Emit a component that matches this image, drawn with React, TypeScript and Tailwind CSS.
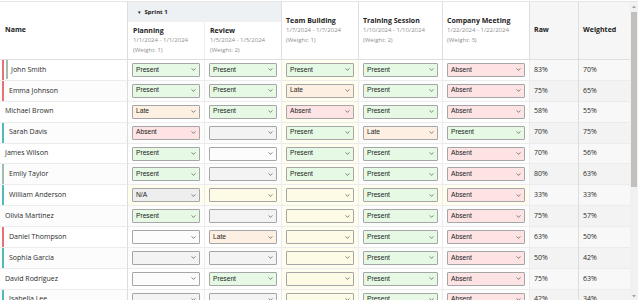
import React from 'react';

type Mark = '' | 'Present' | 'Late' | 'Absent' | 'N/A';
type Bar = 'red' | 'teal' | 'sage';

interface Student {
  name: string;
  bars: Bar[];
  marks: Mark[];
  raw: string;
  weighted: string;
}

const EVENTS = [
  { title: 'Planning', dates: '1/1/2024 - 1/1/2024', weight: 1 },
  { title: 'Review', dates: '1/5/2024 - 1/5/2024', weight: 2 },
  { title: 'Team Building', dates: '1/7/2024 - 1/7/2024', weight: 1 },
  { title: 'Training Session', dates: '1/10/2024 - 1/10/2024', weight: 2 },
  { title: 'Company Meeting', dates: '1/22/2024 - 1/22/2024', weight: 3 },
];

const STUDENTS: Student[] = [
  { name: 'John Smith', bars: ['red', 'sage'], marks: ['Present', 'Present', 'Present', 'Present', 'Absent'], raw: '83%', weighted: '70%' },
  { name: 'Emma Johnson', bars: ['red'], marks: ['Present', 'Present', 'Late', 'Present', 'Absent'], raw: '75%', weighted: '65%' },
  { name: 'Michael Brown', bars: [], marks: ['Late', 'Present', 'Absent', 'Present', 'Absent'], raw: '58%', weighted: '55%' },
  { name: 'Sarah Davis', bars: ['teal'], marks: ['Absent', '', 'Present', 'Late', 'Present'], raw: '70%', weighted: '75%' },
  { name: 'James Wilson', bars: [], marks: ['Present', '', 'Present', 'Present', 'Absent'], raw: '70%', weighted: '56%' },
  { name: 'Emily Taylor', bars: ['sage'], marks: ['Present', '', 'Present', 'Present', 'Absent'], raw: '80%', weighted: '63%' },
  { name: 'William Anderson', bars: ['teal'], marks: ['N/A', '', '', 'Present', 'Absent'], raw: '33%', weighted: '33%' },
  { name: 'Olivia Martinez', bars: [], marks: ['Present', '', '', 'Present', 'Absent'], raw: '75%', weighted: '57%' },
  { name: 'Daniel Thompson', bars: ['red'], marks: ['', 'Late', '', 'Present', 'Absent'], raw: '63%', weighted: '50%' },
  { name: 'Sophia Garcia', bars: ['teal'], marks: ['', '', '', 'Present', 'Absent'], raw: '50%', weighted: '42%' },
  { name: 'David Rodriguez', bars: [], marks: ['', 'Present', '', 'Present', 'Absent'], raw: '75%', weighted: '63%' },
  { name: 'Isabella Lee', bars: ['teal'], marks: ['', '', '', 'Present', 'Absent'], raw: '42%', weighted: '34%' },
  { name: 'Ethan Clark', bars: [], marks: ['Present', 'Present', '', 'Late', 'Present'], raw: '88%', weighted: '81%' },
  { name: 'Mia Lewis', bars: ['red'], marks: ['Absent', '', '', 'Present', 'Absent'], raw: '40%', weighted: '38%' },
];

const BAR_COLOR: Record<Bar, string> = {
  red: 'border-[#e57373]',
  teal: 'border-[#4fb9bb]',
  sage: 'border-[#a3bcb0]',
};

const MARK_BG: Record<Exclude<Mark, ''>, string> = {
  Present: 'bg-[#e5f9e5]',
  Late: 'bg-[#fdf0e2]',
  Absent: 'bg-[#fde3e3]',
  'N/A': 'bg-[#eeeeee]',
};

const NameCell: React.FC<{ name: string; bars: Bar[] }> = ({ name, bars }) => {
  let content: React.ReactNode = <span className="pl-[5px]">{name}</span>;
  if (bars.length === 2) {
    content = (
      <div className={`ml-[2px] h-full border-l-2 ${BAR_COLOR[bars[0]]} flex items-center`}>
        <div className={`ml-[2px] h-[19px] border-l-2 ${BAR_COLOR[bars[1]]} flex items-center pl-[3px]`}>{name}</div>
      </div>
    );
  } else if (bars.length === 1) {
    content = (
      <div className={`ml-[2px] h-full border-l-2 ${BAR_COLOR[bars[0]]} flex items-center pl-[5px]`}>{name}</div>
    );
  }
  return <div className="h-[19.9px] flex items-center">{content}</div>;
};

const MarkSelect: React.FC<{ value: Mark; emptyBg: string }> = ({ value, emptyBg }) => (
  <div className="relative">
    <select
      defaultValue={value}
      className={`block w-full h-[14px] appearance-none border border-[#a6a6a6] rounded-[1px] pl-[3px] pr-[10px] py-0 text-[6.67px] leading-none text-[#222] font-['Liberation_Sans',Arial,sans-serif] ${value ? MARK_BG[value] : emptyBg}`}
    >
      <option value=""></option>
      <option value="Present">Present</option>
      <option value="Late">Late</option>
      <option value="Absent">Absent</option>
      <option value="N/A">N/A</option>
    </select>
    <svg className="absolute right-[4px] top-[5.5px] w-[5px] h-[3px] pointer-events-none" viewBox="0 0 5 3">
      <path d="M0.6 0.4 L2.5 2.4 L4.4 0.4" stroke="#666" strokeWidth="0.8" fill="none" />
    </svg>
  </div>
);

const EventHeader: React.FC<{ title: string; dates: string; weight: number }> = ({ title, dates, weight }) => (
  <div>
    <div className="text-[7px] font-bold leading-[10px] text-[#222]">{title}</div>
    <div className="text-[6px] font-normal leading-[9.5px] text-[#8f8f8f]">{dates}</div>
    <div className="text-[6px] font-normal leading-[9.5px] text-[#8f8f8f]">(Weight: {weight})</div>
  </div>
);

const Scrollbar: React.FC = () => (
  <div className="w-[8px] h-full flex flex-col bg-[#f1f1f1]">
    <div className="h-[8px] flex items-center justify-center">
      <svg viewBox="0 0 4 3" className="w-[4px] h-[3px]">
        <path d="M0 3 L2 0.5 L4 3 Z" fill="#a3a3a3" />
      </svg>
    </div>
    <div className="flex-1 px-px pt-[2px]">
      <div className="h-[175px] bg-[#c2bfbd]" />
    </div>
    <div className="h-[8px] flex items-center justify-center">
      <svg viewBox="0 0 4 3" className="w-[4px] h-[3px]">
        <path d="M0 0 L2 2.5 L4 0 Z" fill="#a3a3a3" />
      </svg>
    </div>
  </div>
);

export default function App() {
  return (
    <div className="w-[640px] h-[300px] bg-white pt-px font-['Open_Sans',sans-serif] text-[#333]">
      <div className="w-[638px] h-[299px] flex border-t border-[#e6e6e6]">
        <div className="w-[630px] h-full overflow-hidden">
          <table className="w-[630px] table-fixed border-separate border-spacing-0">
            <colgroup>
              <col className="w-[128px]" />
              <col className="w-[77px]" />
              <col className="w-[77px]" />
              <col className="w-[77px]" />
              <col className="w-[84px]" />
              <col className="w-[87px]" />
              <col className="w-[49px]" />
              <col className="w-[51px]" />
            </colgroup>
            <thead>
              <tr className="h-[20px]">
                <th rowSpan={2} className="text-left align-middle px-[5px] text-[7px] font-bold text-[#222] border-r border-b border-[#dedede]">
                  Name
                </th>
                <th colSpan={2} className="text-left align-middle px-[9px] bg-[#eef1f3] border-r border-[#dedede]">
                  <span className="flex items-center gap-[3px] text-[6px] font-bold text-[#222]">
                    <span className="text-[4.5px]">▼</span>
                    Sprint 1
                  </span>
                </th>
                {EVENTS.slice(2).map((e) => (
                  <th key={e.title} rowSpan={2} className="text-left align-middle px-[4px] border-r border-b border-[#dedede]">
                    <EventHeader {...e} />
                  </th>
                ))}
                <th rowSpan={2} className="text-left align-middle px-[4px] text-[7px] font-bold text-[#222] bg-[#f6f6f6] border-r border-b border-[#dedede]">
                  Raw
                </th>
                <th rowSpan={2} className="text-left align-middle px-[4px] text-[7px] font-bold text-[#222] bg-[#f6f6f6] border-b border-[#dedede]">
                  Weighted
                </th>
              </tr>
              <tr className="h-[38px]">
                {EVENTS.slice(0, 2).map((e, i) => (
                  <th
                    key={e.title}
                    className={`text-left align-middle px-[5px] border-b border-[#dedede] ${i === 0 ? 'border-r border-r-[#eeeeee]' : 'border-r'}`}
                  >
                    <EventHeader {...e} />
                  </th>
                ))}
              </tr>
            </thead>
            <tbody>
              {STUDENTS.map((s, r) => {
                const odd = r % 2 === 1;
                const hlRow = s.name === 'William Anderson';
                const rowBg = odd ? 'bg-[#fcfcfc]' : 'bg-white';
                return (
                  <tr key={s.name} className="h-[20.9px]">
                    <td className={`p-0 text-[7px] text-[#2b2b2b] border-r border-b border-r-[#dcdcdc] border-b-[#ececec] ${rowBg}`}>
                      <NameCell name={s.name} bars={s.bars} />
                    </td>
                    {s.marks.map((m, c) => {
                      const yellow = c === 2 || hlRow;
                      const cellBg = yellow ? 'bg-[#fffdee]' : rowBg;
                      const emptyBg = yellow ? 'bg-[#fdfae6]' : odd ? 'bg-[#f3f3f3]' : 'bg-[#fcfcfc]';
                      return (
                        <td key={c} className={`px-[4px] py-0 align-middle border-r border-b border-r-[#ececec] border-b-[#ececec] ${cellBg}`}>
                          <MarkSelect value={m} emptyBg={emptyBg} />
                        </td>
                      );
                    })}
                    <td className={`px-[4px] text-[7px] text-[#2b2b2b] border-r border-b border-r-[#dcdcdc] border-b-[#ececec] ${odd ? 'bg-[#f3f3f3]' : 'bg-[#f8f8f8]'}`}>
                      {s.raw}
                    </td>
                    <td className={`px-[4px] text-[7px] text-[#2b2b2b] border-b border-b-[#ececec] ${odd ? 'bg-[#f3f3f3]' : 'bg-[#f8f8f8]'}`}>
                      {s.weighted}
                    </td>
                  </tr>
                );
              })}
            </tbody>
          </table>
        </div>
        <Scrollbar />
      </div>
    </div>
  );
}
